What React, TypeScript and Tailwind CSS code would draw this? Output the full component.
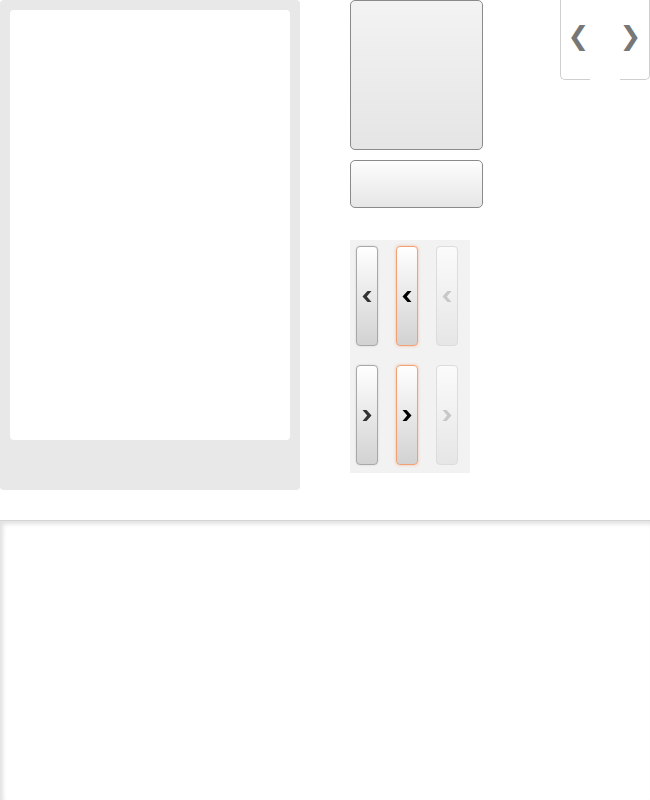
const font = { fontFamily: '"DejaVu Sans", sans-serif' }

function NavButton({ dir, state }: { dir: 'prev' | 'next'; state: 'normal' | 'active' | 'disabled' }) {
  const look =
    state === 'active'
      ? 'border-[#f0a274] bg-gradient-to-b from-white to-[#d2d2d2] text-black shadow-[0_0_3px_rgba(240,150,100,0.6)]'
      : state === 'disabled'
        ? 'border-[#dcdcdc] bg-gradient-to-b from-[#fbfbfb] to-[#e6e6e6] text-[#c8c8c8]'
        : 'border-[#a8a8a8] bg-gradient-to-b from-white to-[#d2d2d2] text-[#333] shadow-[0_0_2px_rgba(0,0,0,0.15)]'
  return (
    <div className={`flex h-[100px] w-[22px] items-center justify-center rounded-[4px] border ${look}`}>
      <svg width="10" height="11" viewBox="0 0 10 11" fill="currentColor">
        {dir === 'prev' ? (
          <polygon points="9.5,0 5.5,0 0.5,5.5 5.5,11 9.5,11 4.8,5.5" />
        ) : (
          <polygon points="0.5,0 4.5,0 9.5,5.5 4.5,11 0.5,11 5.2,5.5" />
        )}
      </svg>
    </div>
  )
}

export default function App() {
  return (
    <div className="h-[800px] w-[650px] overflow-hidden bg-white">
      {/* top area */}
      <div className="flex h-[520px]">
        <div className="h-[490px] w-[300px] rounded-[4px] bg-[#e8e8e8] p-[10px] pb-[50px]">
          <div className="h-full w-full rounded-[4px] bg-white" />
        </div>

        <div className="ml-[50px] flex w-[133px] flex-col">
          <div className="h-[150px] rounded-[5px] border border-[#8a8a8a] bg-gradient-to-b from-[#f3f3f3] to-[#e5e5e5]" />
          <div className="mt-[10px] h-[48px] rounded-[5px] border border-[#8a8a8a] bg-gradient-to-b from-[#fdfdfd] to-[#e6e6e6]" />

          <div className="mt-[32px] grid h-[233px] w-[120px] grid-cols-[22px_22px_22px] content-start gap-x-[18px] gap-y-[19px] bg-[#f2f2f2] px-[6px] pt-[6px]">
            <NavButton dir="prev" state="normal" />
            <NavButton dir="prev" state="active" />
            <NavButton dir="prev" state="disabled" />
            <NavButton dir="next" state="normal" />
            <NavButton dir="next" state="active" />
            <NavButton dir="next" state="disabled" />
          </div>
        </div>

        <div className="ml-auto flex h-[80px] w-[90px]">
          <div className="flex h-full w-[30px] items-center justify-center rounded-bl-[5px] border-b border-l border-[#cfcfcf] pb-[8px] pl-[6px]">
            <span className="text-[26px] leading-none text-[#777]" style={font}>
              ❮
            </span>
          </div>
          <div className="w-[30px]" />
          <div className="flex h-full w-[30px] items-center justify-center rounded-br-[5px] border-r border-b border-[#cfcfcf] pr-[8px] pb-[8px]">
            <span className="text-[26px] leading-none text-[#777]" style={font}>
              ❯
            </span>
          </div>
        </div>
      </div>

      {/* bottom area */}
      <div className="h-[280px] border-t border-[#d4d4d4] shadow-[inset_3px_3px_4px_rgba(0,0,0,0.12)]" />
    </div>
  )
}
